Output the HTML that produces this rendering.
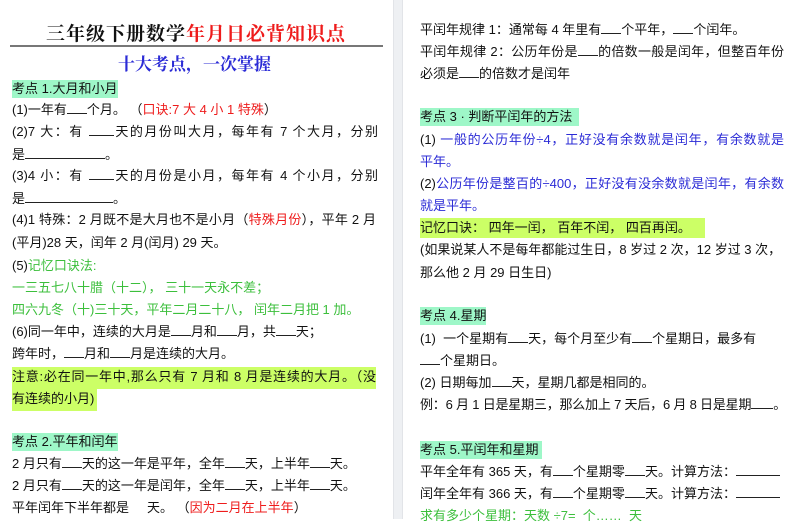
<!DOCTYPE html>
<html><head><meta charset="utf-8"><style>
*{margin:0;padding:0;box-sizing:border-box}
body{width:800px;height:519px;overflow:hidden;background:#fff;font-family:"Liberation Sans","Noto Sans CJK SC",sans-serif;font-size:13px;color:#111;position:relative}
.gap{position:absolute;left:393px;top:0;width:10px;height:519px;background:#eef0f3;border-left:1px solid #e2e4e8;border-right:1px solid #e2e4e8}
.l{position:absolute;white-space:nowrap;line-height:18px;height:18px}
.j{text-align:justify;text-align-last:justify}
.r{color:#ee1c1c}.b{color:#2b2bd6}.g{color:#3cbf3c}
.hm{background:#9ef7c8}.hy{background:#ccff66}
.u{display:inline-block;border-bottom:1px solid #222;height:12px;vertical-align:baseline}
</style></head><body>
<div class="gap"></div>
<div class="l" style="left:46px;top:20px;font-size:19px;line-height:26px;height:26px;font-family:'Noto Serif CJK SC',serif;font-weight:bold;letter-spacing:1px">三年级下册数学<span class="r">年月日必背知识点</span></div>
<div style="position:absolute;left:10px;top:45px;width:373px;height:2px;background:#777"></div>
<div class="l b" style="left:118px;top:52px;font-size:17px;line-height:22px;height:22px;font-family:'Noto Serif CJK SC',serif;font-weight:bold">十大考点，一次掌握</div>
<div class="l hm" style="left:12px;top:80px;width:106px">考点 1.大月和小月</div>
<div class="l" style="left:12px;top:101px">(1)一年有<span class="u" style="width:20px"></span>个月。 （<span class="r">口诀:7 大 4 小 1 特殊</span>）</div>
<div class="l j" style="left:12px;top:123px;width:366px">(2)7 大：有 <span class="u" style="width:25px"></span>天的月份叫大月，每年有 7 个大月，分别</div>
<div class="l" style="left:12px;top:146px">是<span class="u" style="width:80px"></span>。</div>
<div class="l j" style="left:12px;top:167px;width:366px">(3)4 小：有 <span class="u" style="width:25px"></span>天的月份是小月，每年有 4 个小月，分别</div>
<div class="l" style="left:12px;top:190px">是<span class="u" style="width:88px"></span>。</div>
<div class="l j" style="left:12px;top:211px;width:364px">(4)1 特殊：2 月既不是大月也不是小月（<span class="r">特殊月份</span>），平年 2 月</div>
<div class="l" style="left:12px;top:234px">(平月)28 天，闰年 2 月(闰月) 29 天。</div>
<div class="l" style="left:12px;top:257px">(5)<span class="g">记忆口诀法:</span></div>
<div class="l g" style="left:12px;top:279px">一三五七八十腊（十二）， 三十一天永不差；</div>
<div class="l g" style="left:12px;top:301px">四六九冬（十)三十天，平年二月二十八， 闰年二月把 1 加。</div>
<div class="l" style="left:12px;top:323px">(6)同一年中，连续的大月是<span class="u" style="width:20px"></span>月和<span class="u" style="width:20px"></span>月，共<span class="u" style="width:20px"></span>天；</div>
<div class="l" style="left:12px;top:345px">跨年时，<span class="u" style="width:20px"></span>月和<span class="u" style="width:20px"></span>月是连续的大月。</div>
<div class="l hy j" style="left:12px;top:367px;width:364px;height:22px;line-height:20px">注意:必在同一年中,那么只有 7 月和 8 月是连续的大月。（没</div>
<div class="l hy" style="left:12px;top:389px;width:85px;height:22px;line-height:20px">有连续的小月)</div>
<div class="l hm" style="left:12px;top:433px;width:106px">考点 2.平年和闰年</div>
<div class="l" style="left:12px;top:455px">2 月只有<span class="u" style="width:20px"></span>天的这一年是平年，全年<span class="u" style="width:20px"></span>天，上半年<span class="u" style="width:20px"></span>天。</div>
<div class="l" style="left:12px;top:477px">2 月只有<span class="u" style="width:20px"></span>天的这一年是闰年，全年<span class="u" style="width:20px"></span>天，上半年<span class="u" style="width:20px"></span>天。</div>
<div class="l" style="left:12px;top:499px">平年闰年下半年都是 &nbsp; &nbsp; 天。 （<span class="r">因为二月在上半年</span>）</div>

<div class="l" style="left:420px;top:21px">平闰年规律 1：通常每 4 年里有<span class="u" style="width:20px"></span>个平年，<span class="u" style="width:20px"></span>个闰年。</div>
<div class="l j" style="left:420px;top:43px;width:364px">平闰年规律 2：公历年份是<span class="u" style="width:20px"></span>的倍数一般是闰年，但整百年份</div>
<div class="l" style="left:420px;top:65px">必须是<span class="u" style="width:20px"></span>的倍数才是闰年</div>
<div class="l hm" style="left:420px;top:108px;width:159px">考点 3 · 判断平闰年的方法</div>
<div class="l j" style="left:420px;top:131px;width:364px">(1) <span class="b">一般的公历年份÷4，正好没有余数就是闰年，有余数就是</span></div>
<div class="l b" style="left:420px;top:153px">平年。</div>
<div class="l j" style="left:420px;top:175px;width:364px">(2)<span class="b">公历年份是整百的÷400，正好没有没余数就是闰年，有余数</span></div>
<div class="l b" style="left:420px;top:197px">就是平年。</div>
<div class="l hy" style="left:420px;top:218px;width:285px;height:20px;line-height:20px">记忆口诀： 四年一闰， 百年不闰， 四百再闰。</div>
<div class="l" style="left:420px;top:241px">(如果说某人不是每年都能过生日，8 岁过 2 次，12 岁过 3 次，</div>
<div class="l" style="left:420px;top:264px">那么他 2 月 29 日生日)</div>
<div class="l hm" style="left:420px;top:307px;width:66px">考点 4.星期</div>
<div class="l" style="left:420px;top:330px">(1) &nbsp;一个星期有<span class="u" style="width:20px"></span>天，每个月至少有<span class="u" style="width:20px"></span>个星期日，最多有</div>
<div class="l" style="left:420px;top:352px"><span class="u" style="width:20px"></span>个星期日。</div>
<div class="l" style="left:420px;top:374px">(2) 日期每加<span class="u" style="width:20px"></span>天，星期几都是相同的。</div>
<div class="l" style="left:420px;top:396px;letter-spacing:-0.2px">例：6 月 1 日是星期三，那么加上 7 天后，6 月 8 日是星期<span class="u" style="width:22px"></span>。</div>
<div class="l hm" style="left:420px;top:441px;width:122px">考点 5.平闰年和星期</div>
<div class="l" style="left:420px;top:463px">平年全年有 365 天，有<span class="u" style="width:20px"></span>个星期零<span class="u" style="width:20px"></span>天。计算方法：<span class="u" style="width:44px"></span></div>
<div class="l" style="left:420px;top:485px">闰年全年有 366 天，有<span class="u" style="width:20px"></span>个星期零<span class="u" style="width:20px"></span>天。计算方法：<span class="u" style="width:44px"></span></div>
<div class="l g" style="left:420px;top:507px">求有多少个星期：天数 ÷7= &nbsp;个…… &nbsp;天</div>
</body></html>
